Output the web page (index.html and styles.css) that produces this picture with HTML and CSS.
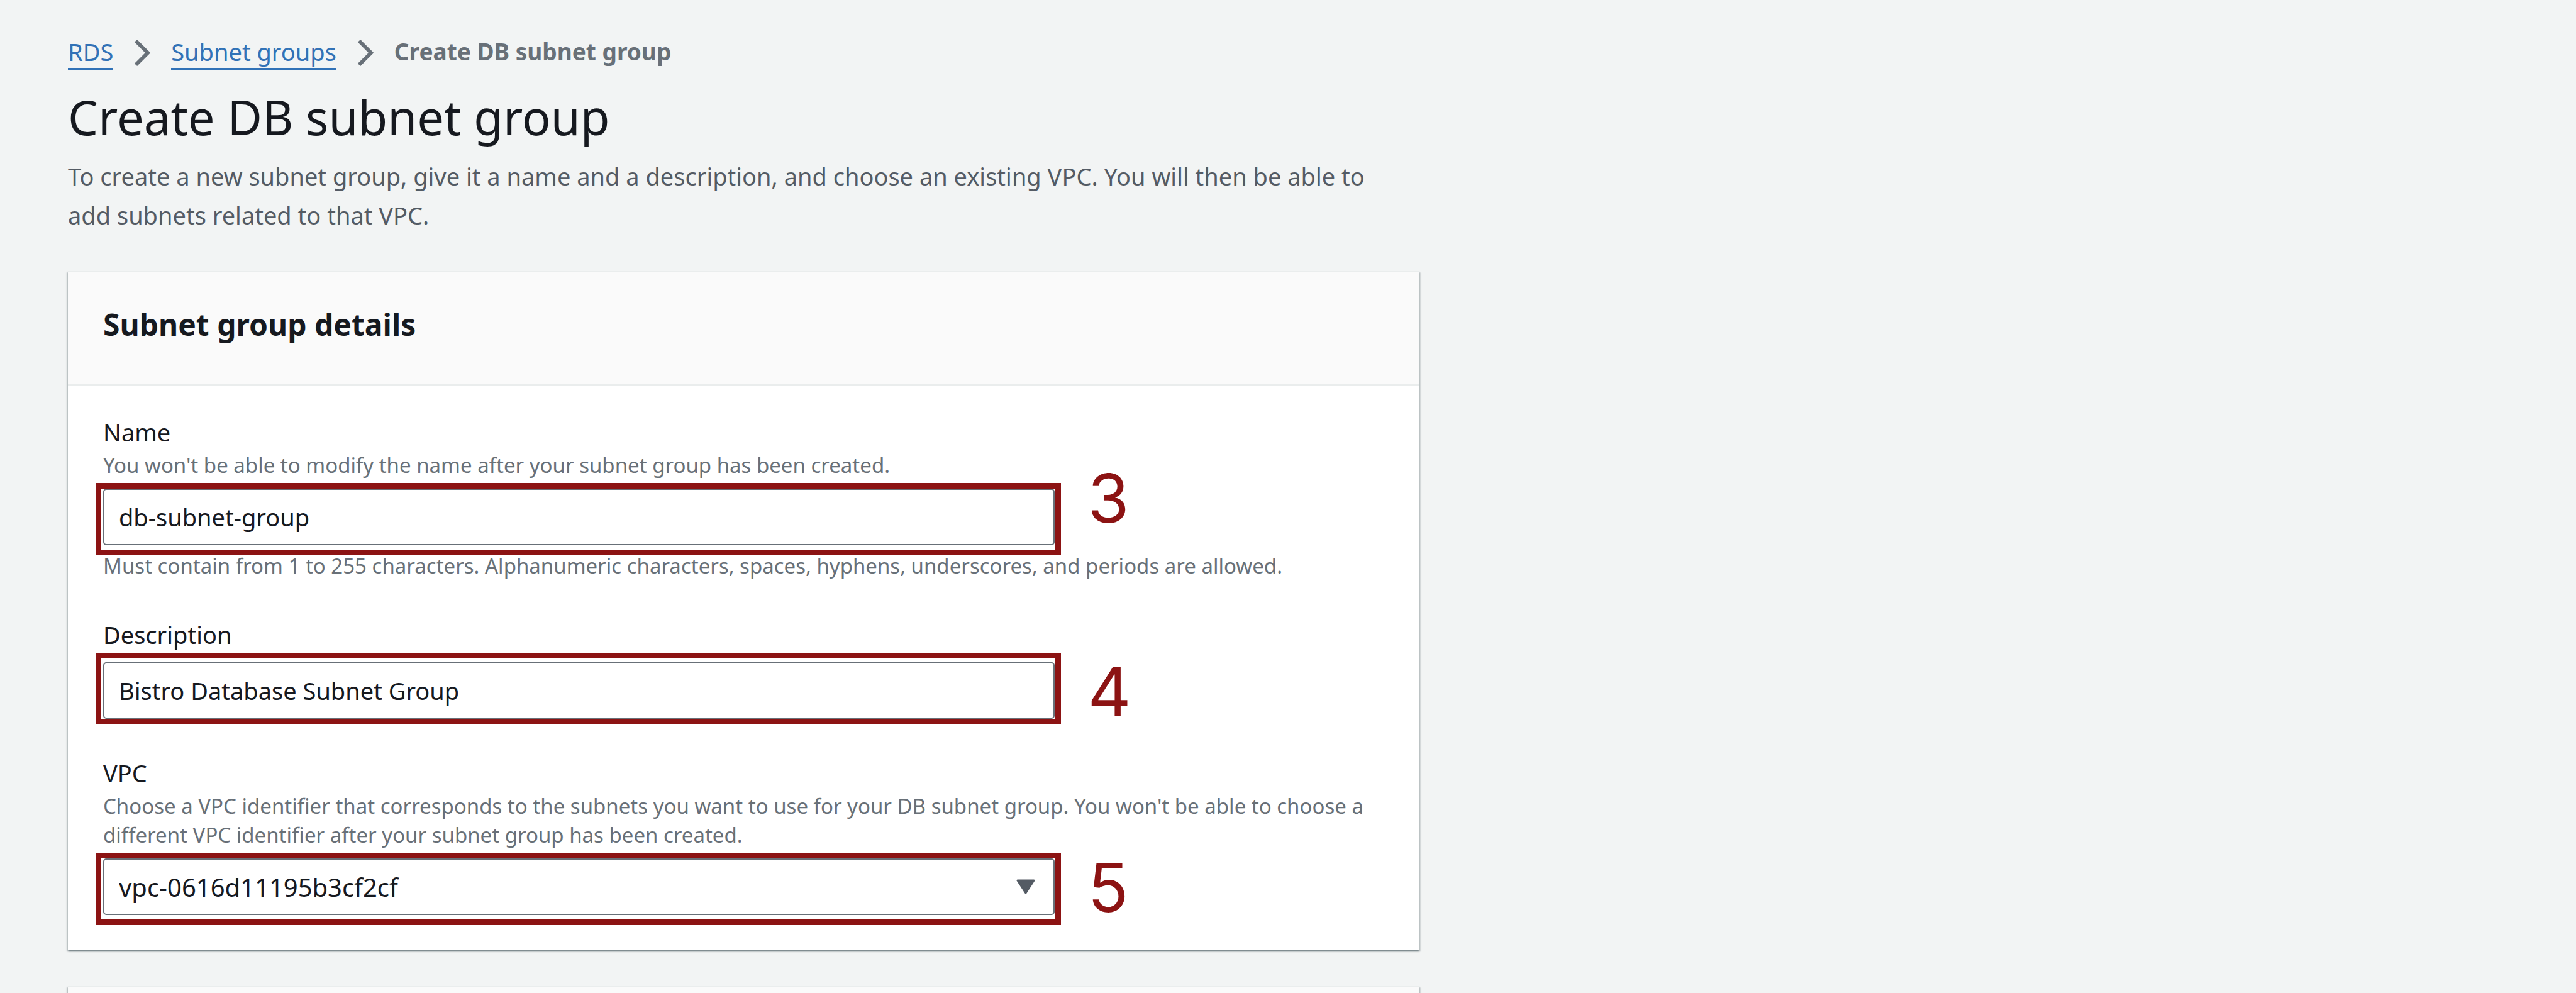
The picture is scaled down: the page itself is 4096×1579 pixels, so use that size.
FILE: index.html
```html
<!DOCTYPE html>
<html lang="en">
<head>
<meta charset="utf-8">
<title>Create DB subnet group</title>
<link rel="stylesheet" href="styles.css">
</head>
<body>
<main class="page">
  <nav class="breadcrumb" aria-label="Breadcrumb">
    <a class="crumb crumb-link" href="#rds">RDS</a>
    <svg class="chevron" viewBox="0 0 26 44" aria-hidden="true"><path d="M3 3 L22 22 L3 41"/></svg>
    <a class="crumb crumb-link" href="#subnet-groups">Subnet groups</a>
    <svg class="chevron" viewBox="0 0 26 44" aria-hidden="true"><path d="M3 3 L22 22 L3 41"/></svg>
    <span class="crumb crumb-current" aria-current="page">Create DB subnet group</span>
  </nav>
  <h1 class="title">Create DB subnet group</h1>
  <p class="intro">To create a new subnet group, give it a name and a description, and choose an existing VPC. You will then be able to add subnets related to that VPC.</p>

  <section class="card">
    <header class="card-header"><h2 class="card-title">Subnet group details</h2></header>
    <form class="card-body">
      <div class="field">
        <label class="label" for="name">Name</label>
        <p class="hint">You won't be able to modify the name after your subnet group has been created.</p>
        <div class="control">
          <input class="input" id="name" type="text" value="db-subnet-group">
          <span class="marker marker-low"></span>
          <span class="step step-high">3</span>
        </div>
        <p class="hint constraint">Must contain from 1 to 255 characters. Alphanumeric characters, spaces, hyphens, underscores, and periods are allowed.</p>
      </div>
      <div class="field">
        <label class="label" for="description">Description</label>
        <div class="control">
          <input class="input" id="description" type="text" value="Bistro Database Subnet Group">
          <span class="marker marker-high"></span>
          <span class="step">4</span>
        </div>
      </div>
      <div class="field">
        <label class="label" for="vpc">VPC</label>
        <p class="hint">Choose a VPC identifier that corresponds to the subnets you want to use for your DB subnet group. You won't be able to choose a different VPC identifier after your subnet group has been created.</p>
        <div class="control">
          <select class="input select" id="vpc"><option>vpc-0616d11195b3cf2cf</option></select>
          <svg class="caret" viewBox="0 0 30 24" aria-hidden="true"><path d="M2 2 H28 L15 22 Z"/></svg>
          <span class="marker marker-low"></span>
          <span class="step">5</span>
        </div>
      </div>
    </form>
  </section>
  <section class="card card-next"></section>
</main>
</body>
</html>
```
FILE: styles.css
```css
* { box-sizing: border-box; }

body {
  margin: 0;
  background: #f2f4f4;
  color: #16191f;
  font-family: "Noto Sans", sans-serif;
  font-size: 38px;
}

.page {
  display: flex;
  flex-direction: column;
  width: 55.2%;
  min-height: 100vh;
  padding: 56px 4px 0 108px;
}

.breadcrumb {
  display: flex;
  align-items: center;
  gap: 33px;
}

.crumb {
  line-height: 52px;
  border-bottom: 3px solid transparent;
}

.crumb-link {
  color: #3172b7;
  text-decoration: none;
  border-color: #3172b7;
}

.crumb-current {
  color: #687078;
  font-size: 37px;
  font-weight: 700;
}

.chevron {
  width: 26px;
  height: 44px;
  fill: none;
  stroke: #687078;
  stroke-width: 6;
}

.title {
  margin: 26px 0 12px;
  font-size: 76px;
  line-height: 98px;
  font-weight: 400;
}

.intro {
  margin: 2px 0 58px;
  padding-right: 56px;
  color: #545b64;
  line-height: 62px;
}

.card {
  margin-bottom: 57px;
  background: #fff;
  border-top: 2px solid #eaeded;
  box-shadow:
    0 2px 2px rgba(0, 28, 36, 0.3),
    2px 2px 2px rgba(0, 28, 36, 0.15),
    -2px 2px 2px rgba(0, 28, 36, 0.15);
}

.card-next {
  flex: 1;
  margin-bottom: 0;
  background: #fafafa;
}

.card-header {
  padding: 48px 56px 60px;
  background: #fafafa;
  border-bottom: 2px solid #eaeded;
}

.card-title {
  margin: 0;
  font-size: 48px;
  line-height: 70px;
}

.card-body {
  display: flex;
  flex-direction: column;
  gap: 60px;
  padding: 48px 56px 56px;
}

.label {
  display: block;
  margin-bottom: 4px;
  line-height: 52px;
}

.hint {
  margin: 0;
  color: #687078;
  font-size: 33px;
  line-height: 46px;
}

.constraint { margin-top: 10px; }

.control {
  position: relative;
  width: 74.3%;
  margin-top: 14px;
}

.label + .control { margin-top: 18px; }

.input {
  display: block;
  width: 100%;
  height: 90px;
  padding: 0 23px;
  appearance: none;
  border: 2px solid #687078;
  border-radius: 5px;
  background: #fff;
  color: #16191f;
  font: inherit;
}

.select { font-size: 40px; }

/* Numbered step callouts drawn over the form */
.marker {
  position: absolute;
  border: 9px solid #8c1313;
  pointer-events: none;
}

.marker-low { inset: -9px -10px -16px -12px; }

.marker-high { inset: -15px -10px -9px -12px; }

.step {
  position: absolute;
  top: 1px;
  left: 100%;
  margin-left: 52px;
  font-family: Inter, sans-serif;
  font-size: 107px;
  line-height: 90px;
  color: #8c1313;
}

.step-high { top: -30px; }

.caret {
  position: absolute;
  top: 33px;
  right: 31px;
  width: 30px;
  height: 24px;
  fill: #545b64;
  stroke: #545b64;
  stroke-width: 3;
  stroke-linejoin: round;
  pointer-events: none;
}
```
